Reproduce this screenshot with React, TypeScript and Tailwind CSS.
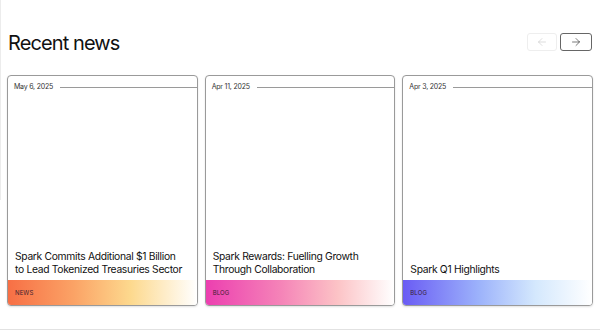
import { ArrowLeft, ArrowRight } from "lucide-react";

const posts = [
  {
    date: "May 6, 2025",
    title: "Spark Commits Additional $1 Billion to Lead Tokenized Treasuries Sector",
    tag: "News",
    band: "bg-[linear-gradient(90deg,#f76f45_0%,#fba366_35%,#fdd98e_65%,#ffffff_100%)]",
  },
  {
    date: "Apr 11, 2025",
    title: "Spark Rewards: Fuelling Growth Through Collaboration",
    tag: "Blog",
    band: "bg-[linear-gradient(90deg,#ec3fb0_0%,#f584b8_40%,#fcc3c6_70%,#ffffff_100%)]",
  },
  {
    date: "Apr 3, 2025",
    title: "Spark Q1 Highlights",
    tag: "Blog",
    band: "bg-[linear-gradient(90deg,#6a5cf4_0%,#9cb2fb_40%,#d4e8fd_70%,#ffffff_100%)]",
  },
];

function NewsCard({ post }: { post: (typeof posts)[number] }) {
  return (
    <div className="flex h-[231px] flex-col overflow-hidden rounded-[4px] border border-[#9a9a9a] bg-white shadow-[0_1px_2px_rgba(0,0,0,0.12)]">
      <div className="flex items-center gap-[7px] pl-[6px] pt-[6px]">
        <span className="text-[7px] leading-[10px] tracking-[-0.03em] text-[#333]">{post.date}</span>
        <div className="h-px flex-1 bg-[#9a9a9a]" />
      </div>
      <div className="flex-1" />
      <h3 className="pb-[5px] pl-[7px] pr-[14px] text-[10.3px] leading-[12.5px] font-normal tracking-[-0.03em] text-[#111]">
        {post.title}
      </h3>
      <div className={`flex h-[25px] items-center px-[7px] ${post.band}`}>
        <span className="text-[6px] uppercase tracking-[0.02em] text-[#3a2030]">{post.tag}</span>
      </div>
    </div>
  );
}

export default function App() {
  return (
    <div
      className="relative h-[332px] w-[600px] overflow-hidden bg-white"
      style={{ fontFamily: "Inter, 'Noto Sans', sans-serif" }}
    >
      <div className="absolute left-0 top-0 h-[200px] w-px bg-[#ececec]" />
      <div className="flex items-center justify-between pl-[8px] pr-[8px] pt-[31px]">
        <h1 className="text-[20px] leading-[24px] font-normal tracking-[-0.045em] text-[#111]">
          Recent news
        </h1>
        <div className="-mt-[3px] flex items-center gap-[3px]">
          <button className="flex h-[18px] w-[30px] items-center justify-center rounded-[3px] border border-[#eeeeee] text-[#c8c8c8]">
            <ArrowLeft size={12} strokeWidth={1.2} />
          </button>
          <button className="flex h-[18px] w-[32px] items-center justify-center rounded-[3px] border border-[#666] text-[#222]">
            <ArrowRight size={12} strokeWidth={1.2} />
          </button>
        </div>
      </div>
      <div className="mt-[20px] grid grid-cols-3 gap-[7px] px-[7px]">
        {posts.map((p) => (
          <NewsCard key={p.date} post={p} />
        ))}
      </div>
      <div className="absolute bottom-[2px] left-0 h-px w-full bg-[#e2e2e2]" />
    </div>
  );
}
